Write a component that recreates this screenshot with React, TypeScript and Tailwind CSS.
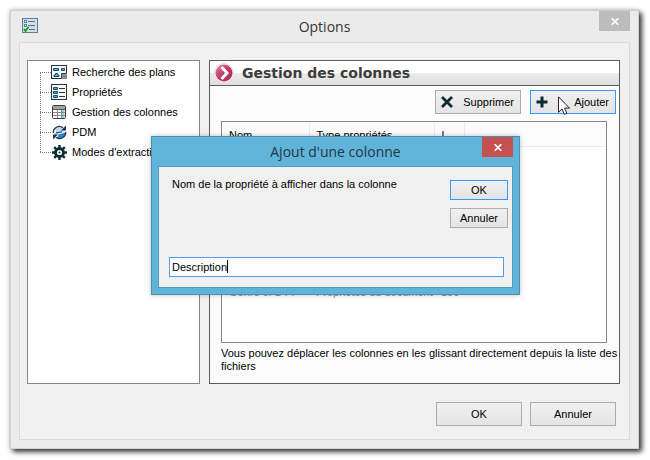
import React from "react";

const items = [
  { label: "Recherche des plans", icon: <PlansIcon /> },
  { label: "Propriétés", icon: <PropsIcon /> },
  { label: "Gestion des colonnes", icon: <TableIcon /> },
  { label: "PDM", icon: <PdmIcon /> },
  { label: "Modes d'extraction", icon: <GearIcon /> },
];

function OptionsIcon() {
  return (
    <svg width="16" height="15" viewBox="0 0 16 15" fill="none">
      <rect x=".5" y=".5" width="15" height="14" fill="#d3dee6" stroke="#5b7f97" />
      <rect x="2.5" y="2.5" width="2" height="2" fill="#fff" stroke="#5b7f97" />
      <rect x="2.5" y="6.5" width="2" height="2" fill="#fff" stroke="#5b7f97" />
      <path d="M6 3.5h7M6 7.5h7M7 11.5h6" stroke="#4f7288" />
      <path d="M2 11l1.500 2L6.500 9" stroke="#12a012" strokeWidth="1.800" />
    </svg>
  );
}
function PlansIcon() {
  return (
    <svg width="16" height="14" viewBox="0 0 16 14" fill="none">
      <rect x=".5" y=".5" width="15" height="13" fill="#f4f8fa" stroke="#2c3238" />
      <path d="M2.500 3.500h5v2h-5zM10.500 3.500h3v2h-3zM4.500 8.500h2v1.500h1.500v1.500h-5v-1.500h1.500z" fill="#62b9da" stroke="#14506c" />
      <rect x="10" y="8" width="6" height="6" fill="#8b8b8b" />
      <path d="M10.500 13.500v-5h5" stroke="#444" />
    </svg>
  );
}
function PropsIcon() {
  return (
    <svg width="16" height="16" viewBox="0 0 16 16" fill="none">
      <rect x=".5" y=".5" width="15" height="15" fill="#f6f8f9" stroke="#2c3238" />
      <path d="M2.500 3.500h4v2h-4zM2.500 7.500h4v2h-4zM2.500 11.500h4v2h-4z" fill="#45a8cf" stroke="#14506c" />
      <path d="M8 4.500h6M8 8.500h6M8 12.500h6" stroke="#333" />
    </svg>
  );
}
function TableIcon() {
  return (
    <svg width="14" height="14" viewBox="0 0 14 14" fill="none">
      <path d="M1 1h12v12H1z" fill="#fff" />
      <path d="M9.500 5h3v8h-3z" fill="#7fdede" />
      <path d="M1 7.500h12M1 10.500h12M5.500 4v9M9.500 4v9" stroke="#8a8a8a" />
      <path d="M1 1h12v3H1z" fill="#a0a0a0" />
      <path d="M1 4.500h12" stroke="#555" />
      <rect x=".5" y=".5" width="13" height="13" rx="1" stroke="#3d3d3d" />
    </svg>
  );
}
function PdmIcon() {
  return (
    <svg width="15" height="15" viewBox="0 0 15 15" fill="none">
      <ellipse cx="8" cy="5" rx="4.500" ry="3" fill="#b8d9f5" />
      <path d="M6.500 9.500l7-2-1 3.500-4 2.500H5z" fill="#2e83d3" />
      <path d="M2 8.500l4-1.500 1 2-4 2z" fill="#a5cdee" />
      <path d="M1.300 8A6 6 0 0 1 11 2.800M13.700 7A6 6 0 0 1 4 12.200" stroke="#26364a" strokeWidth="1.300" />
      <path d="M14 .5v5H9zM1 14.500v-5h5z" fill="#26364a" />
      <path d="M4 7.800l6-1" stroke="#26364a" />
    </svg>
  );
}
function GearIcon() {
  return (
    <svg width="15" height="15" viewBox="0 0 15 15" fill="none" stroke="#0d2b36">
      <circle cx="7.500" cy="7.500" r="4" strokeWidth="2.800" />
      <circle cx="7.500" cy="7.500" r="1" fill="#0d2b36" stroke="none" />
      <path d="M7.500 0v3M7.500 12v3M0 7.500h3M12 7.500h3M2.200 2.200l2 2M10.800 10.800l2 2M12.800 2.200l-2 2M4.200 10.800l-2 2" strokeWidth="2.400" />
    </svg>
  );
}
function ChevronBadge() {
  return (
    <svg width="20" height="20" viewBox="0 0 20 20" fill="none">
      <defs>
        <linearGradient id="badge" x1="0" y1="0" x2="1" y2="1">
          <stop offset="0" stopColor="#e08aa2" />
          <stop offset=".5" stopColor="#c23a62" />
          <stop offset="1" stopColor="#a82a50" />
        </linearGradient>
      </defs>
      <circle cx="10" cy="10" r="9.500" fill="#fff" stroke="#e2dadd" />
      <circle cx="10" cy="10" r="8.500" fill="url(#badge)" />
      <path d="M7.500 4l5.500 6-5.500 6" stroke="#fff" strokeWidth="3" />
    </svg>
  );
}
function CloseGlyph() {
  return (
    <svg width="8" height="7" viewBox="0 0 8 7" stroke="#fff" strokeWidth="1.700">
      <path d="M.7.2l6.600 6.600M7.300.2L.7 6.800" />
    </svg>
  );
}

function PushButton({ children, focus, className }: { children: React.ReactNode; focus?: boolean; className: string }) {
  return (
    <button
      type="button"
      className={`flex items-center border bg-linear-to-b from-[#f0f0f0] to-[#e4e4e4] ${focus ? "border-[#3399ff]" : "border-[#acacac]"} ${className}`}
    >
      {children}
    </button>
  );
}

function Dialog() {
  return (
    <section
      role="dialog"
      aria-labelledby="dialog-title"
      className="absolute left-[140px] top-[125px] flex w-[369px] flex-col border border-[#4a8fb0] bg-[#60b4d9] px-[6px] pb-[6px] shadow-[0_0_5px_rgba(0,0,0,0.25)]"
    >
      <header className="flex h-[29px] items-start">
        <h2 id="dialog-title" className="flex-1 pl-[31px] text-center font-['Open_Sans','Noto_Sans',sans-serif] text-[14px] leading-[30px] text-[#22383f]">
          Ajout d'une colonne
        </h2>
        <button type="button" aria-label="Fermer" className="flex h-5 w-[31px] items-center justify-center bg-[#c75050]">
          <CloseGlyph />
        </button>
      </header>
      <div className="flex flex-col border border-[#4e9cc0] bg-[#f0f0f0] pb-[10px] pl-[10px] pr-1 pt-[11px]">
        <div className="flex items-start justify-between">
          <label htmlFor="column-name" className="pl-[3px]">
            Nom de la propriété à afficher dans la colonne
          </label>
          <div className="flex flex-col gap-2 pt-[2px]">
            <PushButton focus className="h-5 w-[58px] justify-center">OK</PushButton>
            <PushButton className="h-5 w-[58px] justify-center">Annuler</PushButton>
          </div>
        </div>
        <div className="relative mr-1 mt-[29px]">
          <input
            id="column-name"
            defaultValue="Description"
            className="block h-5 w-full border border-[#569de5] bg-white px-[2px] caret-transparent outline-none"
          />
          <span className="absolute left-[58px] top-[3px] h-[13px] w-px bg-black" />
        </div>
      </div>
    </section>
  );
}

export default function App() {
  return (
    <main className="bg-white pb-[11px] pl-[10px] pr-[11px] pt-[10px] font-['Liberation_Sans',Arial,sans-serif] text-[11px] leading-[13px] text-black">
      <div className="relative flex flex-col border border-[#cfcfcf] bg-[#ebebeb] px-2 pb-2 shadow-[3px_3px_5px_rgba(0,0,0,0.75),0_0_5px_rgba(0,0,0,0.25)]">
        <header className="flex h-[31px] items-start">
          <span className="pl-[3px] pt-[7px]"><OptionsIcon /></span>
          <h1 className="flex-1 pl-3 text-center font-['Open_Sans','Noto_Sans',sans-serif] text-[14px] leading-[32px] text-[#333]">Options</h1>
          <button type="button" aria-label="Fermer" className="flex h-5 w-[31px] items-center justify-center bg-[#bcbcbc]">
            <CloseGlyph />
          </button>
        </header>
        <div className="border border-[#dadada] bg-[#f0f0f0] pb-[13px] pl-[7px] pr-[9px] pt-[17px]">
          <div className="flex h-[324px] gap-[9px]">
            <nav className="w-[173px] shrink-0 border border-[#828790] bg-white pl-3 pt-px">
              <ul className="relative">
                <li aria-hidden="true" className="absolute bottom-[10px] left-0 top-[10px] border-l border-dotted border-[#777]" />
                {items.map((item) => (
                  <li key={item.label} className="flex h-5 items-center whitespace-nowrap">
                    <span className="w-[11px] border-t border-dotted border-[#777]" />
                    <span className="flex w-4 justify-center">{item.icon}</span>
                    <a href="#" className="pl-[5px]">{item.label}</a>
                  </li>
                ))}
              </ul>
            </nav>
            <section className="flex min-w-0 flex-1 flex-col border border-[#5c5c5c] bg-[#fcfcfc]">
              <div className="flex h-[25px] items-center gap-2 border-b border-[#5c5c5c] bg-linear-to-b from-white from-50% via-[#ececec] via-50% to-[#dedede] pl-1">
                <ChevronBadge />
                <h2 className="font-['DejaVu_Sans',sans-serif] text-[14px] font-bold leading-5 text-[#3c3c3c]">Gestion des colonnes</h2>
              </div>
              <div className="flex justify-end gap-[9px] pr-[3px] pt-1">
                <PushButton className="h-6 w-[86px] justify-between pl-[5px] pr-[6px]">
                  <svg width="12" height="12" viewBox="0 0 12 12" stroke="#0d2b36" strokeWidth="2.800"><path d="M1 1l10 10M11 1L1 11" /></svg>
                  Supprimer
                </PushButton>
                <PushButton focus className="relative h-6 w-[86px] justify-between pl-[5px] pr-[6px]">
                  <svg width="12" height="12" viewBox="0 0 12 12" stroke="#0d2b36" strokeWidth="3"><path d="M6 .5v11M.5 6h11" /></svg>
                  Ajouter
                  <svg className="absolute left-[27px] top-[5px]" width="12" height="19" viewBox="0 0 12 19" fill="#fff" stroke="#222">
                    <path d="M.5.8v15.500l3.500-3.400 2.400 5.500 2.500-1.100-2.400-5.200h5z" />
                  </svg>
                </PushButton>
              </div>
              <div className="ml-[11px] mr-3 mt-[7px] h-[222px] overflow-hidden border border-[#828790] bg-white">
                <table className="w-full table-fixed border-collapse whitespace-nowrap text-left">
                  <colgroup><col className="w-[87px]" /><col className="w-[125px]" /><col className="w-[30px]" /><col /></colgroup>
                  <thead>
                    <tr className="h-6 border-b border-[#e3edf9] bg-[#fcfcfc]">
                      <th className="border-r border-[#e3edf9] pl-[7px] pt-[3px] font-normal">Nom</th>
                      <th className="border-r border-[#e3edf9] pl-[7px] pt-[3px] font-normal">Type propriétés</th>
                      <th className="border-r border-[#e3edf9] pl-[7px] pt-[3px] font-normal">L...</th>
                      <th />
                    </tr>
                  </thead>
                  <tbody className="text-[#8a8f96]">
                    <tr className="h-[292px]">
                      <td className="pl-[7px]">Genre of DTT</td>
                      <td className="pl-[7px]">Propriétés du document</td>
                      <td className="pl-[7px]">100</td>
                      <td />
                    </tr>
                  </tbody>
                </table>
              </div>
              <p className="pl-[11px] pt-1">
                Vous pouvez déplacer les colonnes en les glissant directement depuis la liste des fichiers
              </p>
            </section>
          </div>
          <div className="flex justify-end gap-2 pr-[4px] pt-[18px]">
            <PushButton className="h-6 w-[86px] justify-center">OK</PushButton>
            <PushButton className="h-6 w-[86px] justify-center">Annuler</PushButton>
          </div>
        </div>
        <Dialog />
      </div>
    </main>
  );
}
